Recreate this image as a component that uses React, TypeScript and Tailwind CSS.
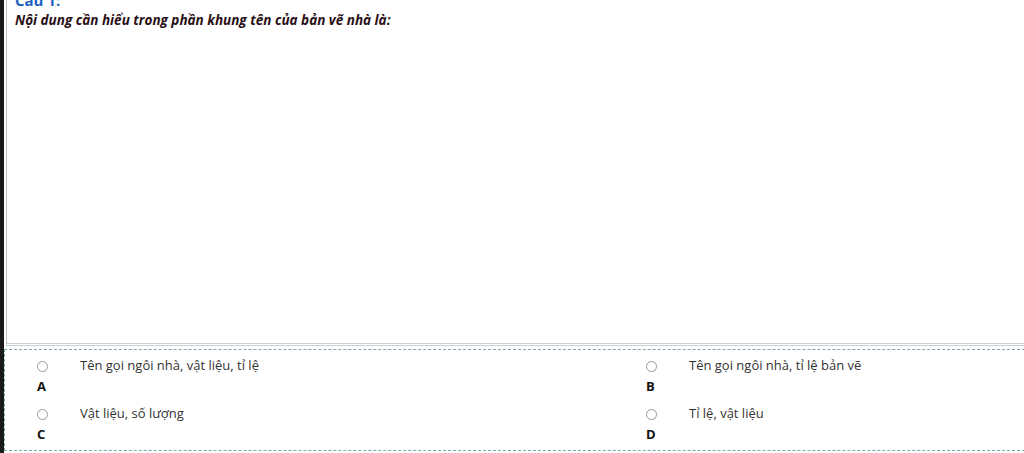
const options = [
  { key: "A", text: "Tên gọi ngôi nhà, vật liệu, tỉ lệ" },
  { key: "B", text: "Tên gọi ngôi nhà, tỉ lệ bản vẽ" },
  { key: "C", text: "Vật liệu, số lượng" },
  { key: "D", text: "Tỉ lệ, vật liệu" },
];

function Option({ letter, text }: { letter: string; text: string }) {
  return (
    <div className="flex flex-col h-[48px]">
      <div className="flex items-center h-[20px]">
        <span className="ml-[32px] w-[11px] h-[11px] rounded-full border border-[#9a9a9a] bg-white" />
        <span className="ml-[32px] text-[13px] text-[#333]">{text}</span>
      </div>
      <span className="ml-[32px] text-[13px] font-bold text-[#111] leading-[20px]">{letter}</span>
    </div>
  );
}

export default function App() {
  return (
    <div
      className="w-[1024px] h-[453px] overflow-hidden bg-white flex"
      style={{ fontFamily: '"Open Sans", "Noto Sans", sans-serif' }}
    >
      <div className="w-[4px] bg-[#1a1a1a] shrink-0" />
      <div className="flex-1 flex flex-col">
        <div className="h-[346px] ml-[2px] border-l border-b-[3px] border-b-[#c9d3d6] border-l-[#b9c2c4] border-double flex flex-col">
          <div className="-mt-[9px] ml-[8px] text-[15px] font-bold text-[#1f5fbf] leading-[18px]">Câu 1:</div>
          <div className="ml-[8px] mt-[2px] text-[13.5px] font-bold italic text-[#2a0f16] leading-[18px]">
            Nội dung cần hiểu trong phần khung tên của bản vẽ nhà là:
          </div>
        </div>
        <div className="mt-[3px] -mr-[6px] h-[102px] border border-dashed border-[#7fa7ad] grid grid-cols-[609px_1fr] pt-[6px]">
          {options.map((o) => (
            <Option key={o.key} letter={o.key} text={o.text} />
          ))}
        </div>
      </div>
    </div>
  );
}
